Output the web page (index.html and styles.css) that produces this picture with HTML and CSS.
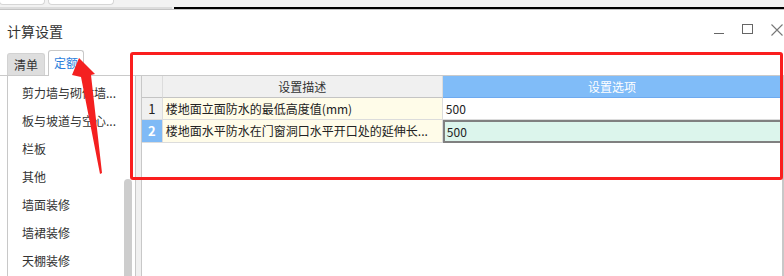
FILE: index.html
```html
<!DOCTYPE html>
<html lang="zh-CN">
<head>
    <meta charset="UTF-8">
    <meta name="viewport" content="width=device-width, initial-scale=1.0">
    <title>计算设置</title>
    <link rel="stylesheet" href="styles.css">
</head>
<body>
    <div class="topbar">
        <div class="top-tabs">
            <div class="top-tab tab-a"></div>
            <div class="top-tab tab-b"></div>
        </div>
        <div class="topline">
            <div class="topline-left"></div>
            <div class="topline-right"></div>
        </div>
    </div>

    <div class="dialog">
        <div class="titlebar">
            <span class="title">计算设置</span>
            <div class="controls">
                <svg width="10" height="11" viewBox="0 0 10 11"><line x1="0" y1="9.5" x2="10" y2="9.5" stroke="#666" stroke-width="1"/></svg>
                <svg width="11" height="11" viewBox="0 0 11 11"><rect x="0.5" y="0.5" width="10" height="9" fill="none" stroke="#666" stroke-width="1"/></svg>
                <svg width="12" height="12" viewBox="0 0 12 12"><path d="M0.5 0.5 L11.5 11.5 M11.5 0.5 L0.5 11.5" stroke="#777" stroke-width="1.1"/></svg>
            </div>
        </div>

        <div class="tabs">
            <div class="tab">清单</div>
            <div class="tab active">定额</div>
        </div>

        <div class="main">
            <div class="list">
                <ul class="list-items">
                    <li>剪力墙与砌体墙...</li>
                    <li>板与坡道与空心...</li>
                    <li>栏板</li>
                    <li>其他</li>
                    <li>墙面装修</li>
                    <li>墙裙装修</li>
                    <li>天棚装修</li>
                </ul>
                <div class="scrollbar"><div class="thumb"></div></div>
            </div>
            <div class="splitter"></div>
            <div class="grid">
                <div class="cell head"></div>
                <div class="cell head">设置描述</div>
                <div class="cell head option">设置选项</div>

                <div class="cell num">1</div>
                <div class="cell desc">楼地面立面防水的最低高度值(mm)</div>
                <div class="cell value">500</div>

                <div class="cell num selected">2</div>
                <div class="cell desc">楼地面水平防水在门窗洞口水平开口处的延伸长...</div>
                <div class="cell value editing">500</div>
            </div>
        </div>
    </div>

    <!-- 标注 -->
    <div class="mark-box"></div>
    <svg class="mark-arrow" width="784" height="276" viewBox="0 0 784 276">
        <polygon points="79,58 95,74 91,75 102,173 100,174 81,77 72,75" fill="#f42020"/>
    </svg>
</body>
</html>
```

FILE: styles.css
```css
body {
    margin: 0;
    width: 784px;
    height: 276px;
    overflow: hidden;
    background: #fff;
    font-family: "Noto Sans CJK SC", sans-serif;
    font-size: 12px;
    color: #333;
    position: relative;
}
.topbar {
    background: #f2f2f2;
    border-bottom: 1px solid #c4c4c4;
}
.top-tabs {
    display: flex;
    height: 7px;
}
.top-tab {
    height: 4px;
    background: #fff;
    border: 1px solid #d6d6d6;
    border-top: none;
    border-radius: 0 0 4px 4px;
}
.tab-a {
    width: 44px;
    margin-left: -1px;
}
.tab-b {
    width: 64px;
    margin-left: 3px;
}
.topline {
    display: flex;
    height: 2px;
}
.topline-left {
    width: 172px;
    background: #dcdcdc;
}
.topline-right {
    flex: 1;
    margin-left: 2px;
    background: #000;
}
.dialog {
    display: flex;
    flex-direction: column;
    height: 266px;
}
.titlebar {
    height: 39px;
    display: flex;
    align-items: center;
    justify-content: space-between;
    padding-left: 7px;
}
.title {
    font-size: 14px;
    color: #333;
    margin-top: 2px;
}
.controls {
    display: flex;
    align-items: center;
    gap: 18px;
    padding-right: 1px;
}
.tabs {
    display: flex;
    align-items: flex-end;
    height: 26px;
    padding-left: 7px;
    border-bottom: 1px solid #cacaca;
}
.tab {
    height: 21px;
    line-height: 21px;
    padding: 0 6px;
    background: #dedede;
    border: 1px solid #d2d2d2;
    border-bottom: none;
    border-radius: 3px 3px 0 0;
    color: #333;
}
.tab.active {
    height: 25px;
    line-height: 23px;
    margin-left: 3px;
    margin-bottom: -1px;
    padding: 0 5px;
    background: #fff;
    border-color: #c8c8c8;
    color: #2d7fdc;
}
.main {
    flex: 1;
    display: flex;
    margin-left: 7px;
    min-height: 0;
}
.list {
    width: 127px;
    display: flex;
    border-left: 1px solid #c8c8c8;
}
.list-items {
    flex: 1;
    list-style: none;
    margin: 0;
    padding: 3px 0 0 14px;
}
.list-items li {
    height: 28px;
    line-height: 28px;
    white-space: nowrap;
}
.scrollbar {
    width: 8px;
    margin-right: 3px;
    padding-top: 103px;
}
.thumb {
    height: 100%;
    background: #cdcdcd;
    border-radius: 4px 4px 0 0;
}
.splitter {
    width: 5px;
    background: #f0f0f0;
    border-left: 1px solid #c8c8c8;
}
.grid {
    width: 641px;
    border-left: 1px solid #c8c8c8;
    border-right: 2px solid #c8c8c8;
    display: grid;
    grid-template-columns: 21px 280px 1fr;
    grid-template-rows: 22px 22px 23px;
    align-content: start;
    color: #222;
}
.cell {
    border-right: 1px solid #dcdcdc;
    border-bottom: 1px solid #dcdcdc;
    line-height: 21px;
    padding-left: 3px;
    white-space: nowrap;
    overflow: hidden;
}
.head {
    background: #f0f0f0;
    border-bottom-color: #c4c4c4;
    text-align: center;
    padding-left: 0;
    color: #333;
}
.head.option {
    background: #80bcf8;
    border-color: #6eaaf0;
    color: #fff;
}
.num {
    background: #f0f0f0;
    text-align: center;
    padding-left: 0;
    font-size: 13px;
}
.num.selected {
    background: #7fbaf6;
    color: #fff;
    font-weight: bold;
}
.desc {
    background: #fffce9;
}
.value {
    background: #fff;
}
.value.editing {
    background: #dcf5ec;
    border: 2px solid #808080;
    line-height: 19px;
    padding-left: 2px;
}
.mark-box {
    position: absolute;
    left: 130px;
    top: 52px;
    width: 647px;
    height: 122px;
    border: 3px solid #fa1e1e;
    border-radius: 3px;
}
.mark-arrow {
    position: absolute;
    left: 0;
    top: 0;
}
```
